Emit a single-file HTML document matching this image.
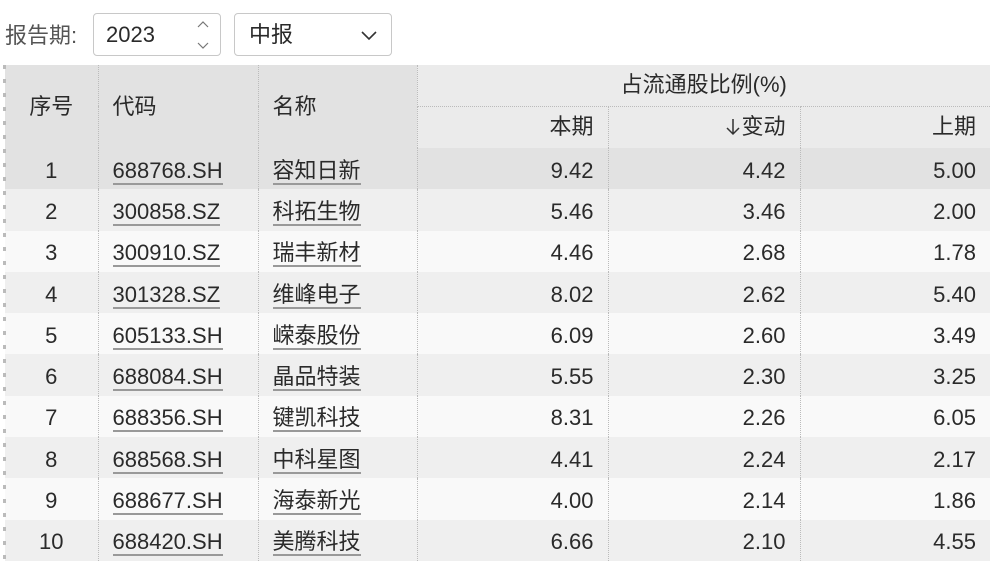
<!DOCTYPE html>
<html><head><meta charset="utf-8"><style>
*{margin:0;padding:0;box-sizing:border-box}
body{width:994px;height:565px;background:#fff;font-family:"Liberation Sans","Noto Sans CJK SC",sans-serif;color:#2a2a2a;position:relative;overflow:hidden}
.lbl{position:absolute;left:5px;top:22px;font-size:22px;line-height:28px;color:#555}
.box{position:absolute;top:13px;height:43px;border:1px solid #c8c8c8;border-radius:4px;font-size:22px;line-height:41px}
table{position:absolute;left:5px;top:65px;border-collapse:collapse;font-size:22px;table-layout:fixed}
td,th{font-weight:normal;height:41.3px;padding:0 14px;border-left:1px dotted #bbb;white-space:nowrap;line-height:26px}
td{padding-top:4px}
th{background:#e2e2e2}
th.g{background:#ebebeb}
tr:nth-child(odd) td{background:#f9f9f9}
tr:nth-child(even) td{background:#efefef}
tr.hl td{background:#e2e2e2!important}
.r{text-align:right}
.c{text-align:center}
u{text-decoration:none;border-bottom:2px solid #999;padding-bottom:0px}
.lm{position:absolute;left:3px;top:65px;width:3px;height:496px;background:repeating-linear-gradient(#bbb 0 4px,transparent 4px 14px)}
</style></head><body>
<div class="lbl">报告期:</div>
<div class="box" style="left:93px;width:128px;padding-left:12px">2023<svg style="position:absolute;right:11px;top:6px" width="12" height="30"><path d="M1 7l5-5 5 5M1 23l5 5 5-5" stroke="#777" stroke-width="1.2" fill="none"/></svg></div>
<div class="box" style="left:234px;width:158px;padding-left:14px">中报<svg style="position:absolute;right:14px;top:17px" width="16" height="10"><path d="M1 1l7 7 7-7" stroke="#333" stroke-width="1.6" fill="none"/></svg></div>
<table>
<colgroup><col style="width:93px"><col style="width:160px"><col style="width:159px"><col style="width:191px"><col style="width:192px"><col style="width:190px"></colgroup>
<tr style="height:41px"><th rowspan="2" class="c" style="border-left:none">序号</th><th rowspan="2" style="text-align:left">代码</th><th rowspan="2" style="text-align:left">名称</th><th colspan="3" class="g c" style="height:41px;border-bottom:1px dotted #bbb">占流通股比例(%)</th></tr>
<tr style="height:42px"><th class="g r">本期</th><th class="g r"><svg width="16" height="18" style="vertical-align:-2px"><path d="M8 1v15M2 10l6 6 6-6" stroke="#333" stroke-width="1.5" fill="none"/></svg>变动</th><th class="g r">上期</th></tr>
<tr class="hl"><td class="c" style="border-left:none">1</td><td><u>688768.SH</u></td><td><u>容知日新</u></td><td class="r">9.42</td><td class="r">4.42</td><td class="r">5.00</td></tr>
<tr><td class="c" style="border-left:none">2</td><td><u>300858.SZ</u></td><td><u>科拓生物</u></td><td class="r">5.46</td><td class="r">3.46</td><td class="r">2.00</td></tr>
<tr><td class="c" style="border-left:none">3</td><td><u>300910.SZ</u></td><td><u>瑞丰新材</u></td><td class="r">4.46</td><td class="r">2.68</td><td class="r">1.78</td></tr>
<tr><td class="c" style="border-left:none">4</td><td><u>301328.SZ</u></td><td><u>维峰电子</u></td><td class="r">8.02</td><td class="r">2.62</td><td class="r">5.40</td></tr>
<tr><td class="c" style="border-left:none">5</td><td><u>605133.SH</u></td><td><u>嵘泰股份</u></td><td class="r">6.09</td><td class="r">2.60</td><td class="r">3.49</td></tr>
<tr><td class="c" style="border-left:none">6</td><td><u>688084.SH</u></td><td><u>晶品特装</u></td><td class="r">5.55</td><td class="r">2.30</td><td class="r">3.25</td></tr>
<tr><td class="c" style="border-left:none">7</td><td><u>688356.SH</u></td><td><u>键凯科技</u></td><td class="r">8.31</td><td class="r">2.26</td><td class="r">6.05</td></tr>
<tr><td class="c" style="border-left:none">8</td><td><u>688568.SH</u></td><td><u>中科星图</u></td><td class="r">4.41</td><td class="r">2.24</td><td class="r">2.17</td></tr>
<tr><td class="c" style="border-left:none">9</td><td><u>688677.SH</u></td><td><u>海泰新光</u></td><td class="r">4.00</td><td class="r">2.14</td><td class="r">1.86</td></tr>
<tr><td class="c" style="border-left:none">10</td><td><u>688420.SH</u></td><td><u>美腾科技</u></td><td class="r">6.66</td><td class="r">2.10</td><td class="r">4.55</td></tr>
</table>
<div class="lm"></div>
</body></html>
